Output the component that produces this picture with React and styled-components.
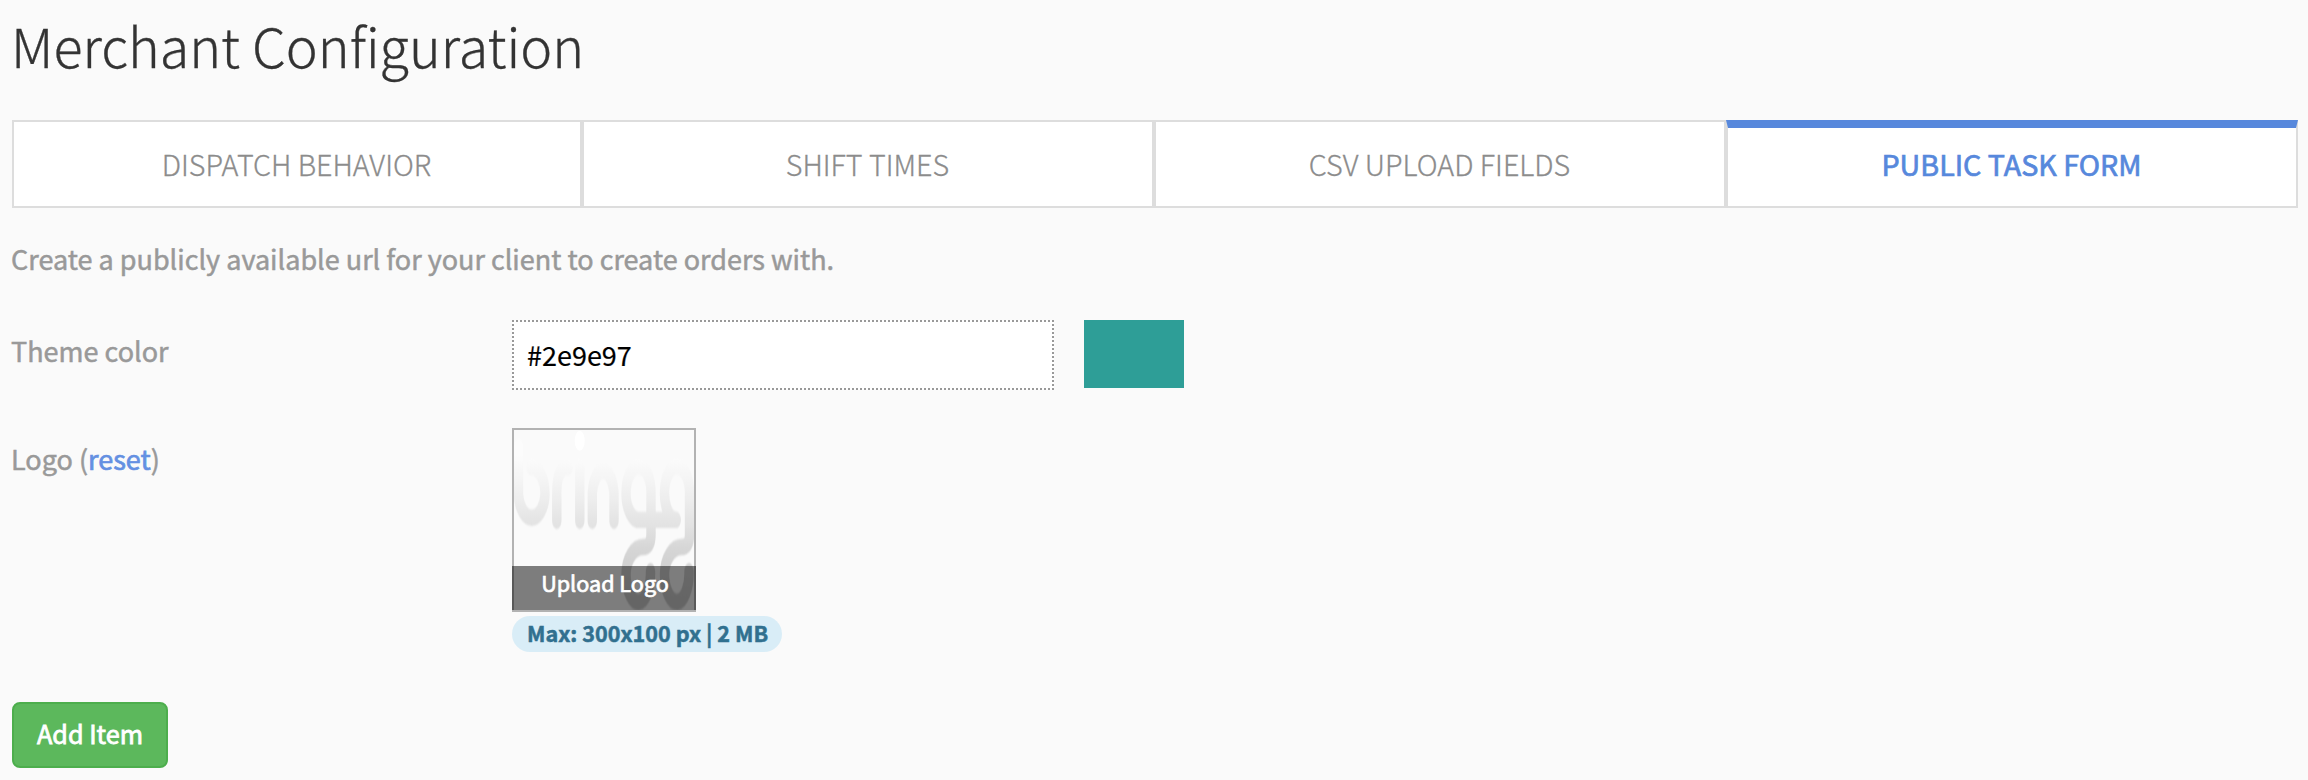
import React from "react";
import styled, { createGlobalStyle } from "styled-components";

const GlobalStyle = createGlobalStyle`
  *, *::before, *::after { box-sizing: border-box; }
  body {
    margin: 0;
    background: #fafafa;
    color: #999;
    font-family: "Source Sans Pro", "Noto Sans CJK SC", "Noto Sans", sans-serif;
    font-size: 27px;
    line-height: 40px;
    -webkit-text-stroke: 0.5px currentColor;
  }
`;

const Page = styled.main`
  height: 780px;
  padding: 5px 10px 0 12px;
  overflow: hidden;
`;

const Title = styled.h1`
  margin: 0 0 35px -1px;
  height: 80px;
  line-height: 80px;
  font-size: 53.9px;
  font-weight: 300;
  color: #333;
  -webkit-text-stroke-width: 0.3px;
`;

const Tabs = styled.nav`
  display: grid;
  grid-template-columns: 570px 572px 572px 1fr;
  height: 88px;
`;

const Tab = styled.a`
  display: flex;
  justify-content: center;
  height: 88px;
  border: 2px solid #ddd;
  border-top: ${(p) => (p.$active ? "8px solid #5788dc" : "2px solid #ddd")};
  padding-top: ${(p) => (p.$active ? 16 : 22)}px;
  padding-right: 1px;
  background: #fff;
  color: ${(p) => (p.$active ? "#5788dc" : "#8c8c8c")};
  font-size: 28.7px;
  font-weight: ${(p) => (p.$active ? 400 : 300)};
  -webkit-text-stroke-width: ${(p) => (p.$active ? 0.7 : 0.3)}px;
  text-transform: uppercase;
`;

const Intro = styled.p`
  margin: 31px 0 0 -1px;
`;

const Row = styled.div`
  display: grid;
  grid-template-columns: 500px 1fr;
  align-items: start;
  margin-top: ${(p) => p.$gap}px;
`;

const Label = styled.label`
  margin-left: -1px;
  padding-top: 11px;
`;

const Reset = styled.a`
  color: #6490e2;
  -webkit-text-stroke: 0.7px #6490e2;
`;

const ColorField = styled.div`
  display: flex;
  align-items: flex-start;
  gap: 30px;
`;

const ColorInput = styled.input`
  width: 542px;
  height: 70px;
  padding: 0 13px 2px;
  border: 2px dotted #999;
  border-radius: 0;
  background: #fff;
  color: #000;
  font: inherit;
  -webkit-text-stroke-width: 0.2px;
  outline: none;
`;

const Swatch = styled.div`
  width: 100px;
  height: 68px;
  background: #2e9e97;
`;

const LogoField = styled.div`
  display: flex;
  flex-direction: column;
  align-items: flex-start;
  gap: 4px;
`;

const LogoBox = styled.div`
  position: relative;
  width: 184px;
  height: 184px;
  border: 2px solid #b2b2b2;
`;

const LogoArt = styled.svg`
  display: block;
  width: 180px;
  height: 180px;
`;

const UploadBar = styled.div`
  position: absolute;
  left: -2px;
  right: -2px;
  bottom: 0;
  height: 44px;
  padding-left: 2px;
  background: rgba(0, 0, 0, 0.5);
  color: #fff;
  font-size: 21.6px;
  line-height: 33px;
  text-align: center;
  -webkit-text-stroke: 0.7px #fff;
`;

const Badge = styled.span`
  height: 36px;
  padding: 0 14px 0 15px;
  border-radius: 18px;
  background: #d9edf7;
  color: #31708f;
  font-size: 21.6px;
  font-weight: 700;
  line-height: 34px;
  white-space: nowrap;
`;

const AddButton = styled.button`
  display: block;
  width: 156px;
  height: 66px;
  margin-top: 50px;
  padding: 0 0 4px;
  border: 2px solid #4cae4c;
  border-radius: 8px;
  background: #5cb85c;
  color: #fff;
  font: inherit;
  font-size: 25.2px;
  -webkit-text-stroke: 0.8px #fff;
`;

function BringgLogo() {
  return (
    <LogoArt viewBox="2 2 180 180" aria-label="bringg">
      <defs>
        <linearGradient id="fade" gradientUnits="userSpaceOnUse" x1="0" y1="16" x2="0" y2="104">
          <stop offset="0" stopColor="#fcfcfc" />
          <stop offset="0.24" stopColor="#f0f0f0" />
          <stop offset="0.47" stopColor="#e1e1e1" />
          <stop offset="0.63" stopColor="#d4d4d4" />
          <stop offset="1" stopColor="#c9c9c9" />
        </linearGradient>
        <filter id="soft" filterUnits="userSpaceOnUse" x="-10" y="-10" width="210" height="130">
          <feGaussianBlur stdDeviation="0.7" />
        </filter>
      </defs>
      <g transform="scale(1 1.75)" fill="none" stroke="url(#fade)" strokeWidth="9.4" strokeLinecap="round" filter="url(#soft)">
        <path d="M6.5 11V38A13.3 14.5 0 0 0 33 38A13.3 15.5 0 0 0 19 22.5" />
        <path d="M44.8 53V37Q44.8 22.5 56 22.5" />
        <path d="M67.8 22V53" />
        <path d="M80.3 53V37A11 15 0 0 1 102 37V53" />
        <path d="M164 52.5H127A13 15.25 0 0 1 127 22A12 15 0 0 1 139 37V61Q139 68 131 68A17 16 0 0 0 114 84A12 16 0 0 0 138.5 82" />
        <path d="M164 52.5A12 15.25 0 0 1 165 22A12.5 15 0 0 1 177.5 37V61Q177.5 68 169.5 68A17 16 0 0 0 152.5 84A12 16 0 0 0 177 82" />
      </g>
      <ellipse cx="67.7" cy="12.7" rx="5" ry="10" fill="#fff" />
    </LogoArt>
  );
}

const tabs = ["Dispatch Behavior", "Shift Times", "CSV Upload Fields", "Public Task Form"];

export default function App() {
  return (
    <>
      <GlobalStyle />
      <Page>
        <Title>Merchant Configuration</Title>
        <Tabs>
          {tabs.map((name, i) => (
            <Tab key={name} $active={i === 3}>{name}</Tab>
          ))}
        </Tabs>
        <Intro>Create a publicly available url for your client to create orders with.</Intro>
        <Row $gap={41}>
          <Label>Theme color</Label>
          <ColorField>
            <ColorInput defaultValue="#2e9e97" />
            <Swatch />
          </ColorField>
        </Row>
        <Row $gap={38}>
          <Label>Logo (<Reset>reset</Reset>)</Label>
          <LogoField>
            <LogoBox>
              <BringgLogo />
              <UploadBar>Upload Logo</UploadBar>
            </LogoBox>
            <Badge>Max: 300x100 px | 2 MB</Badge>
          </LogoField>
        </Row>
        <AddButton>Add Item</AddButton>
      </Page>
    </>
  );
}
